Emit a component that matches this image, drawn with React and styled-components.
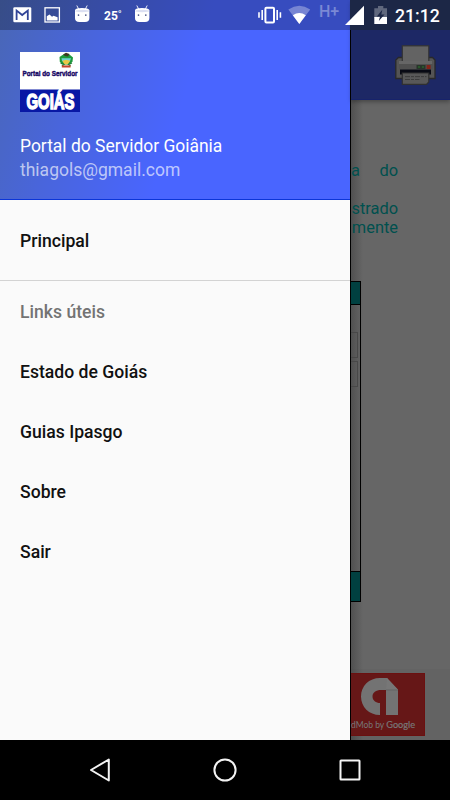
import React from "react";
import styled, { createGlobalStyle } from "styled-components";

const colors = {
  primary: "#4965ff",
  toolbar: "#1d2865",
  page: "#666666",
  drawer: "#fafafa",
  teal: "#004040",
  tealText: "#00504e",
  ad: "#661717",
};

const GlobalStyle = createGlobalStyle`
  * {
    box-sizing: border-box;
  }

  body {
    margin: 0;
    background: #000;
    font-family: Roboto, "Noto Sans", sans-serif;
  }
`;

const Screen = styled.div`
  position: relative;
  display: flex;
  flex-direction: column;
  width: 450px;
  height: 800px;
  overflow: hidden;
`;

const Main = styled.div`
  display: grid;
  grid-template-columns: 350px 100px;
  height: 740px;
`;

/* Status bar */

const StatusBar = styled.header`
  position: absolute;
  top: 0;
  left: 0;
  z-index: 2;
  display: flex;
  width: 450px;
  height: 30px;
  background: linear-gradient(
    90deg,
    rgba(0, 0, 0, 0.25) 350px,
    #1c2746 350px
  );
`;

const StatusLeft = styled.div`
  display: flex;
  align-items: center;
  width: 258px;
  padding-left: 12px;

  svg {
    flex: none;
  }
`;

const StatusRight = styled.div`
  display: flex;
  align-items: center;

  svg {
    flex: none;
  }
`;

const Temperature = styled.span`
  width: 34px;
  padding: 2px 0 0 6px;
  color: #fff;
  font-size: 12px;
  font-weight: 700;
  line-height: 14px;
`;

const Network = styled.span`
  width: 26px;
  height: 22px;
  padding-left: 7px;
  color: rgba(255, 255, 255, 0.34);
  font-size: 16px;
  font-weight: 500;
  line-height: 15px;
`;

const Clock = styled.span`
  padding: 1px 0 0 7px;
  color: #fff;
  font-size: 17.7px;
  font-weight: 500;
  line-height: 20px;
  white-space: nowrap;
`;

/* Drawer */

const Drawer = styled.aside`
  display: flex;
  flex-direction: column;
  background: ${colors.drawer};
`;

const DrawerHeader = styled.div`
  height: 200px;
  padding: 52px 20px 0;
  border-bottom: 1px solid #0b35d8;
  background: linear-gradient(
    108deg,
    #4967b5 0%,
    #4965db 24%,
    ${colors.primary} 52%
  );
`;

const AccountName = styled.div`
  margin-top: 22px;
  color: #fff;
  font-size: 17.45px;
  line-height: 24px;
  white-space: nowrap;
`;

const AccountMail = styled.div`
  color: rgba(255, 255, 255, 0.65);
  font-size: 17.5px;
  line-height: 24px;
`;

const Menu = styled.nav`
  display: flex;
  flex-direction: column;
`;

const MenuItem = styled.a`
  display: flex;
  align-items: center;
  height: 60px;
  padding-left: 20px;
  color: #111;
  font-size: 17.6px;
  font-weight: 500;
  line-height: 24px;

  &:first-child {
    height: 81px;
    padding-top: 2px;
    border-bottom: 1px solid #d3d3d3;
  }
`;

const MenuLabel = styled(MenuItem).attrs({ as: "div" })`
  height: 61px;
  color: #737373;
`;

/* Dimmed page behind the drawer */

const Page = styled.main`
  display: flex;
  flex-direction: column;
  min-width: 0;
  border-left: 1px solid #000;
  background: linear-gradient(90deg, #505050 0, ${colors.page} 12px);
`;

const Toolbar = styled.div`
  display: flex;
  justify-content: flex-end;
  height: 100px;
  padding: 45px 14px 0 0;
  background: ${colors.toolbar};
  border-bottom: 1px solid #17236b;
  box-shadow: 0 2px 4px rgba(0, 0, 0, 0.3);
`;

const Notice = styled.div`
  width: 47px;
  height: 181px;
  padding-top: 61px;
  color: ${colors.tealText};
  font-size: 16.4px;
  line-height: 19px;
  text-align: right;
`;

const NoticeLine = styled.p`
  display: flex;
  justify-content: ${({ $spread }) => ($spread ? "space-between" : "flex-end")};
  margin: 0 0 ${({ $gap }) => $gap || 0}px;
`;

const Table = styled.div`
  display: flex;
  flex-direction: column;
  width: 10px;
  height: 321px;
  border: 1px solid #000;
  border-left: 0;
`;

const TableBand = styled.div`
  flex: none;
  height: ${({ $height }) => $height}px;
  background: ${colors.teal};
`;

const TableBody = styled.div`
  display: flex;
  flex: 1;
  flex-direction: column;
  gap: 3px;
  padding: 27px 2px 0 0;
  border-top: 1px solid #000;
  border-bottom: 1px solid #000;
`;

const Field = styled.div`
  height: 26px;
  border: 1px solid #484848;
  border-left: 0;
`;

const AdSlot = styled.div`
  flex: 1;
  margin-top: 67px;
  padding-top: 4px;
  background: linear-gradient(90deg, #4e4e4e 0, #636363 12px);
`;

const Ad = styled.div`
  display: flex;
  flex-direction: column;
  width: 74px;
  height: 63px;
  padding: 4px 0 0 10px;
  border: 1px solid #6b1010;
  border-left: 0;
  background: ${colors.ad};
`;

const AdText = styled.span`
  margin: 3px 0 0 -10px;
  color: #777;
  font-family: Lato, sans-serif;
  font-size: 8.5px;
  line-height: 14px;
  white-space: nowrap;
`;

const AdBrand = styled.span`
  font-size: 9.2px;
  -webkit-text-stroke: 0.2px #777;
`;

/* Navigation bar */

const NavBar = styled.footer`
  display: flex;
  align-items: center;
  justify-content: center;
  gap: 95px;
  height: 60px;
  background: #000;
`;

const MailIcon = () => (
  <svg width="20" height="30" viewBox="0 0 20 30">
    <rect x="1.3" y="7.3" width="18" height="15" rx="1.3" fill="#fff" />
    <path
      d="M4.6 20V10.6L10.2 15L15.8 10.6V20"
      fill="none"
      stroke="#314497"
      strokeWidth="1.8"
    />
  </svg>
);

const ImageIcon = () => (
  <svg width="40" height="30" viewBox="0 0 40 30">
    <rect
      x="13"
      y="7.8"
      width="14.4"
      height="14.2"
      fill="none"
      stroke="#fff"
      strokeWidth="1.3"
    />
    <path
      d="M14.8 20.4V16.3L17.5 14.6L20 16.8L21.5 15.7L25.6 17.2V20.4Z"
      fill="#fff"
    />
  </svg>
);

const DroidIcon = ({ width = 26 }) => (
  <svg width={width} height="30" viewBox={`0 0 ${width} 30`}>
    <path
      d="M4.8 5.5L6.6 9M15.2 5.5L13.4 9"
      stroke="#fff"
      strokeWidth="0.9"
    />
    <path
      d="M3 10Q3.5 8 10 8Q16.5 8 17.4 10V18Q17.4 22 13 22H7.4Q3 22 3 18Z"
      fill="#fff"
    />
    <path d="M3.3 10.6Q10 8.8 17.1 10.6V11.4Q10 13 3.3 11.4Z" fill="#dce0f2" />
    <circle cx="6.5" cy="15.1" r="0.85" fill="#495587" />
    <circle cx="13.8" cy="15.1" r="0.85" fill="#495587" />
  </svg>
);

const VibrateIcon = () => (
  <svg width="24" height="30" viewBox="0 0 24 30">
    <rect
      x="7.4"
      y="7.7"
      width="8.6"
      height="14.8"
      rx="1"
      fill="none"
      stroke="#fff"
      strokeWidth="2"
    />
    <path
      d="M4.2 10V20M1 12.3V17.8M19.2 10V20M22.4 12.3V17.8"
      stroke="#fff"
      strokeWidth="1.6"
    />
  </svg>
);

const WifiIcon = () => (
  <svg width="30" height="30" viewBox="0 0 30 30">
    <path
      d="M6.4 9.4Q17.3 2.1 28.2 9.4L17.3 24Z"
      fill="rgba(255,255,255,0.32)"
    />
    <path d="M10.8 15.3Q17.3 10.5 23.8 15.3L17.3 24Z" fill="#fff" />
  </svg>
);

const SignalIcon = () => (
  <svg width="28" height="30" viewBox="0 0 28 30">
    <path d="M7 25L26 5.7V25Z" fill="#fff" />
  </svg>
);

const BatteryIcon = () => (
  <svg width="22" height="30" viewBox="0 0 22 30">
    <path
      d="M8.3 8.2H12V6H17.3V8.2H21V18H8.3Z"
      fill="rgba(255,255,255,0.3)"
    />
    <path d="M8.3 17H21V24H8.3Z" fill="#fff" />
    <path d="M16.3 9.8L10.8 16.4H14L12.8 21L18.5 14.5H15.3Z" fill="#1c2746" />
  </svg>
);

const LogoSvg = styled.svg`
  display: block;
  overflow: visible;
  font-family: "Liberation Sans", sans-serif;
  font-weight: 700;
`;

const Logo = () => (
  <LogoSvg width="60" height="60" viewBox="0 0 60 60">
    <rect width="60" height="60" fill="#fff" />
    <rect y="37.5" width="60" height="22.5" fill="#0818a5" />
    <path
      d="M39.5 5L42.5 3L45 2L49.5 2.5L53 5.5L52.5 9.5L50 12.5H42L39.8 9.5Z"
      fill="#1d9a3d"
    />
    <path d="M43 2.5L46 .8L49.5 2L48 4.5L45 4Z" fill="#3c3a22" />
    <path d="M41.5 6.2H51L50 9L46 11L42 9Z" fill="#6fd0d6" />
    <path d="M42.3 8.8L46 7.8L50.2 8.8L48 12.2H44.3Z" fill="#e8c844" />
    <path
      d="M40.5 11L44 12.5L42 14M52 11L48.5 12.5L50.5 14"
      fill="none"
      stroke="#227c36"
      strokeWidth="1.2"
    />
    <path d="M41.8 13.4H50.6V15.5H41.8Z" fill="#c2452c" />
    <text
      x="2.5"
      y="23.7"
      fill="#190965"
      stroke="#190965"
      strokeWidth="0.45"
      fontSize="8"
      textLength="55"
      lengthAdjust="spacingAndGlyphs"
    >
      Portal do Servidor
    </text>
    <text
      x="6.5"
      y="57.3"
      fill="#fff"
      stroke="#fff"
      strokeWidth="1.5"
      fontSize="21.5"
      textLength="48"
      lengthAdjust="spacingAndGlyphs"
    >
      GOIÁS
    </text>
  </LogoSvg>
);

const PrinterIcon = () => (
  <svg width="41" height="41" viewBox="0 0 41 41">
    <path
      d="M3.5 12.5H37.5L40 15V33.5H.8V15Z"
      fill="#545454"
      stroke="#292929"
      strokeWidth="1.3"
    />
    <rect
      x="7.3"
      y=".8"
      width="26.5"
      height="16"
      fill="#636363"
      stroke="#343434"
      strokeWidth="1.2"
    />
    <rect x="4" y="16" width="33" height="3" fill="#666" />
    <rect x="4" y="19" width="34" height="5.5" fill="#505050" />
    <rect x="21.5" y="20" width="9" height="4" fill="#28352b" />
    <path d="M23 22H25M27 22H29" stroke="#28632c" strokeWidth="1.4" />
    <rect x="31.6" y="20" width="4" height="4" fill="#822319" />
    <rect x="5" y="24.5" width="31" height="5" fill="#080a14" />
    <path
      d="M7.3 28H33.8V37L31.5 39.3H7.3Z"
      fill="#585858"
      stroke="#303030"
      strokeWidth="1.2"
    />
    <path
      d="M10 31.6H31.5M10 34.5H24.5"
      stroke="#3c3c3c"
      strokeWidth="1"
      strokeDasharray="5 1 3 1"
    />
  </svg>
);

const AdMobLogo = () => (
  <svg width="38" height="37" viewBox="0 0 38 37" display="block">
    <path
      d="M19 37C8 37 0 29 0 18.5S8 0 19 0H26L37 11.5V37H25V12H20C15 12 11.5 14.5 11.5 18.5S15 25 19 25Z"
      fill="#737373"
    />
    <path d="M25 12H37L26 0Z" fill="#777" />
    <path d="M25 12H37" stroke="#656565" strokeWidth="1" />
  </svg>
);

const BackIcon = () => (
  <svg width="30" height="30" viewBox="0 0 30 30">
    <path
      d="M6 15L23.8 4.5V25.5Z"
      fill="none"
      stroke="#f3f3f3"
      strokeWidth="2"
      strokeLinejoin="round"
    />
  </svg>
);

const HomeIcon = () => (
  <svg width="30" height="30" viewBox="0 0 30 30">
    <circle
      cx="15"
      cy="15"
      r="10.6"
      fill="none"
      stroke="#f3f3f3"
      strokeWidth="2"
    />
  </svg>
);

const RecentsIcon = () => (
  <svg width="30" height="30" viewBox="0 0 30 30">
    <rect
      x="5.5"
      y="5.5"
      width="19"
      height="19"
      rx="0.5"
      fill="none"
      stroke="#f3f3f3"
      strokeWidth="2"
    />
  </svg>
);

const links = ["Estado de Goiás", "Guias Ipasgo", "Sobre", "Sair"];

const App = () => (
  <>
    <GlobalStyle />
    <Screen>
      <StatusBar>
        <StatusLeft>
          <MailIcon />
          <ImageIcon />
          <DroidIcon />
          <Temperature>25˚</Temperature>
          <DroidIcon width={20} />
        </StatusLeft>
        <StatusRight>
          <VibrateIcon />
          <WifiIcon />
          <Network>H+</Network>
          <SignalIcon />
          <BatteryIcon />
          <Clock>21:12</Clock>
        </StatusRight>
      </StatusBar>

      <Main>
        <Drawer>
          <DrawerHeader>
            <Logo />
            <AccountName>Portal do Servidor Goiânia</AccountName>
            <AccountMail>thiagols@gmail.com</AccountMail>
          </DrawerHeader>
          <Menu>
            <MenuItem>Principal</MenuItem>
            <MenuLabel>Links úteis</MenuLabel>
            {links.map((link) => (
              <MenuItem key={link}>{link}</MenuItem>
            ))}
          </Menu>
        </Drawer>

        <Page>
          <Toolbar>
            <PrinterIcon />
          </Toolbar>
          <Notice>
            <NoticeLine $spread $gap={19}>
              <span>a</span>
              <span>do</span>
            </NoticeLine>
            <NoticeLine>strado</NoticeLine>
            <NoticeLine>mente</NoticeLine>
          </Notice>
          <Table>
            <TableBand $height={22} />
            <TableBody>
              <Field />
              <Field />
            </TableBody>
            <TableBand $height={29} />
          </Table>
          <AdSlot>
            <Ad>
              <AdMobLogo />
              <AdText>
                dMob by <AdBrand>Google</AdBrand>
              </AdText>
            </Ad>
          </AdSlot>
        </Page>
      </Main>

      <NavBar>
        <BackIcon />
        <HomeIcon />
        <RecentsIcon />
      </NavBar>
    </Screen>
  </>
);

export default App;
